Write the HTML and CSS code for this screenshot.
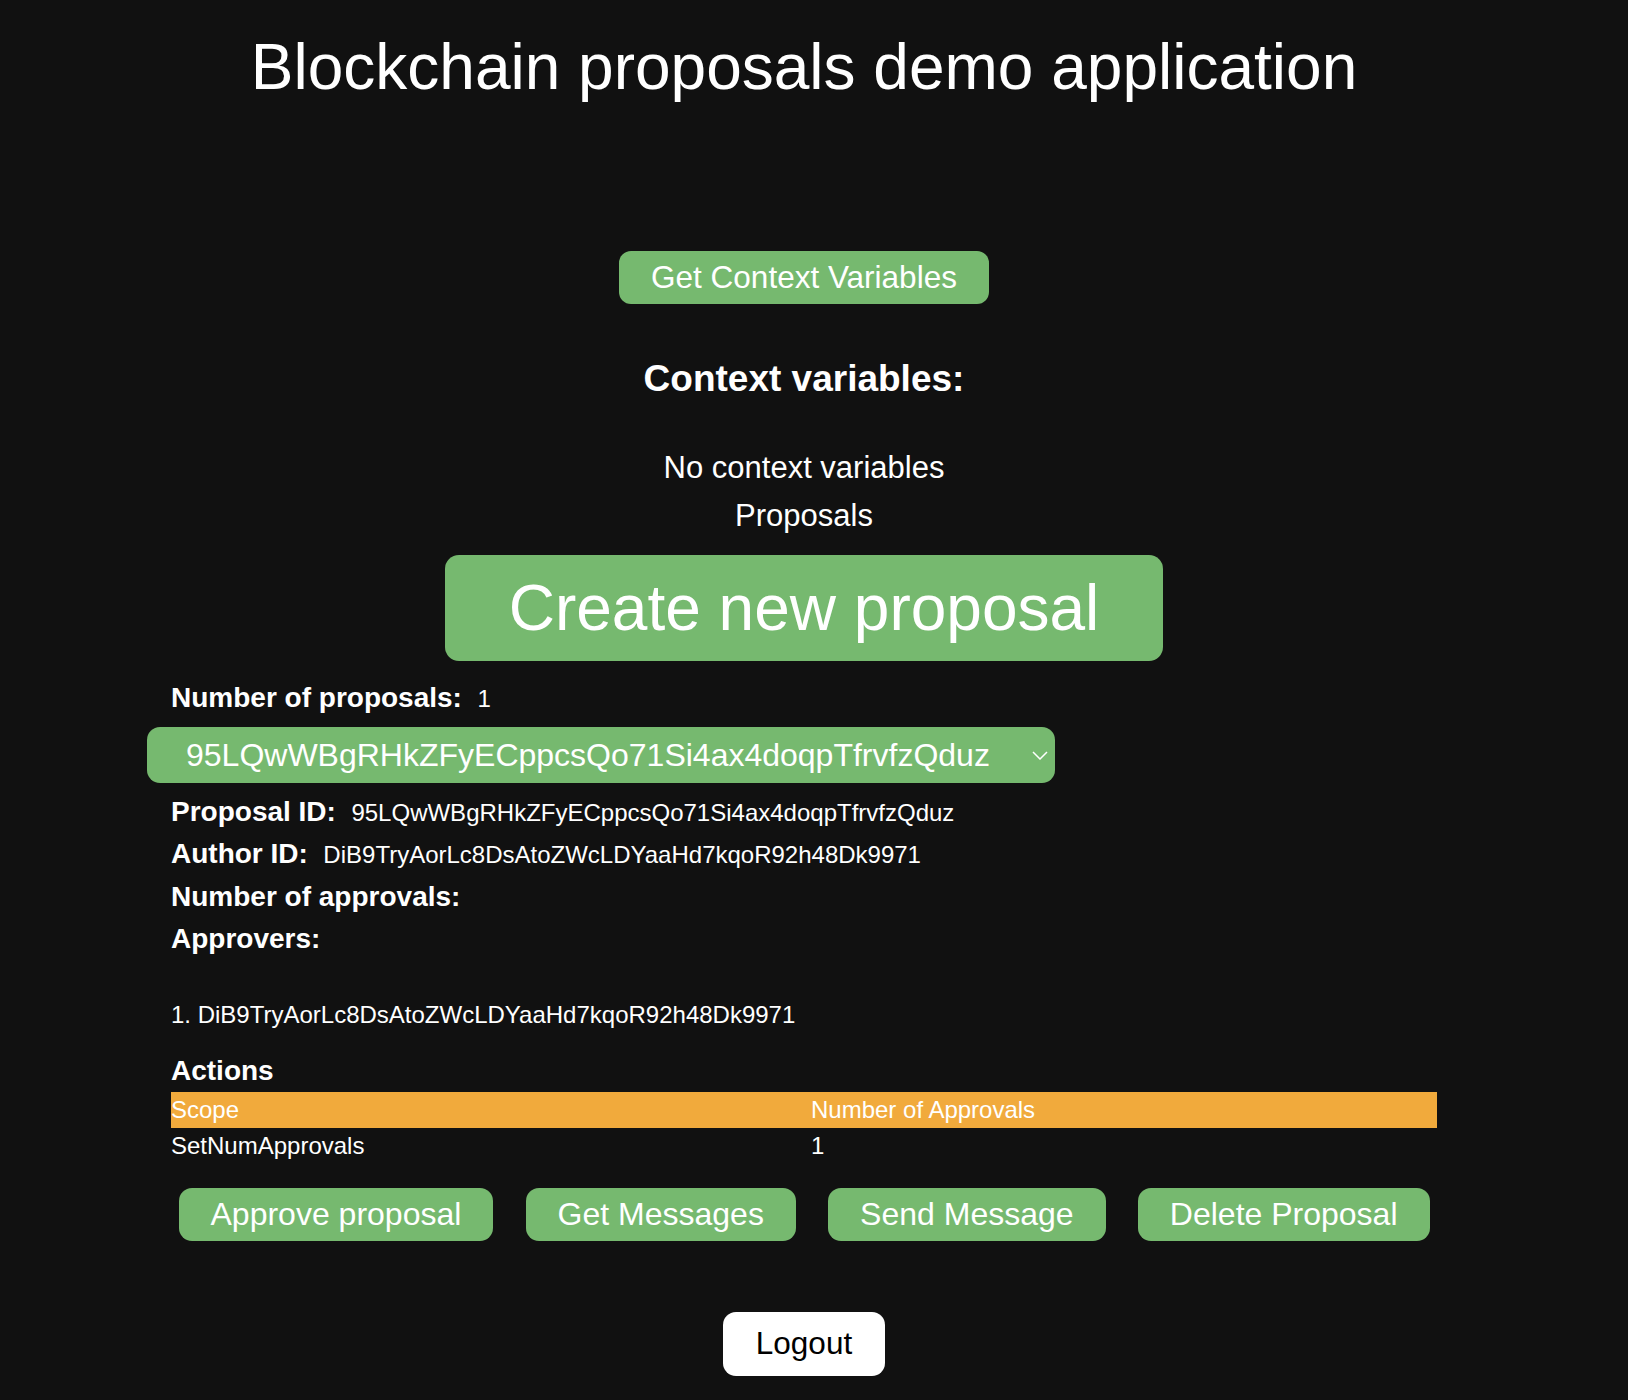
FILE: index.html
```html
<!DOCTYPE html>
<html lang="en">
<head>
<meta charset="utf-8">
<title>Blockchain proposals demo application</title>
<link rel="stylesheet" href="styles.css">
</head>
<body>
<div class="app">
  <div class="top">
    <h1 class="title">Blockchain proposals demo application</h1>
    <button class="btn btn-ctx">Get Context Variables</button>
    <h2 class="ctx-title">Context variables:</h2>
    <p class="ctx-empty">No context variables</p>
    <p class="proposals-title">Proposals</p>
    <button class="btn btn-create">Create new proposal</button>
  </div>

  <div class="content">
    <div class="row">
      <span class="label">Number of proposals:</span>
      <span class="value">1</span>
    </div>
    <div class="select-wrap">
      <select class="proposal-select">
        <option>95LQwWBgRHkZFyECppcsQo71Si4ax4doqpTfrvfzQduz</option>
      </select>
      <svg class="chevron" width="16" height="9" viewBox="0 0 16 9"><path d="M1 1 L8 8 L15 1" fill="none" stroke="#ffffff" stroke-width="1.5"/></svg>
    </div>
    <div class="row info-first">
      <span class="label">Proposal ID:</span>
      <span class="value">95LQwWBgRHkZFyECppcsQo71Si4ax4doqpTfrvfzQduz</span>
    </div>
    <div class="row">
      <span class="label">Author ID:</span>
      <span class="value">DiB9TryAorLc8DsAtoZWcLDYaaHd7kqoR92h48Dk9971</span>
    </div>
    <div class="row">
      <span class="label">Number of approvals:</span>
      <span class="value"></span>
    </div>
    <div class="row">
      <span class="label">Approvers:</span>
    </div>
    <ol class="approvers">
      <li>DiB9TryAorLc8DsAtoZWcLDYaaHd7kqoR92h48Dk9971</li>
    </ol>
    <h3 class="actions-title">Actions</h3>
    <table class="actions-table">
      <thead>
        <tr><th class="col-scope">Scope</th><th>Number of Approvals</th></tr>
      </thead>
      <tbody>
        <tr><td>SetNumApprovals</td><td>1</td></tr>
      </tbody>
    </table>
    <div class="action-buttons">
      <button class="btn btn-action">Approve proposal</button>
      <button class="btn btn-action">Get Messages</button>
      <button class="btn btn-action">Send Message</button>
      <button class="btn btn-action">Delete Proposal</button>
    </div>
  </div>

  <div class="logout-wrap">
    <button class="btn-logout">Logout</button>
  </div>
</div>
</body>
</html>
```
FILE: styles.css
```css
html, body {
  margin: 0;
  padding: 0;
  background: #111111;
}

body {
  color: #ffffff;
  font-family: "Liberation Sans", Arial, Helvetica, sans-serif;
}

.app {
  width: 1608px;
  padding-top: 30px;
  padding-bottom: 24px;
}

.top {
  display: flex;
  flex-direction: column;
  align-items: center;
}

.title {
  margin: 0;
  font-size: 64px;
  font-weight: normal;
  line-height: normal;
}

.btn {
  border: none;
  background: #76b96f;
  color: #ffffff;
  font-family: inherit;
  line-height: normal;
  cursor: pointer;
}

.btn-ctx {
  margin-top: 147px;
  font-size: 31.5px;
  padding: 8px 32px;
  border-radius: 12px;
}

.ctx-title {
  margin: 54px 0 0;
  font-size: 37px;
  font-weight: bold;
  line-height: normal;
}

.ctx-empty {
  margin: 49.5px 0 0;
  font-size: 31px;
  line-height: normal;
}

.proposals-title {
  margin: 12px 0 0;
  font-size: 31px;
  line-height: normal;
}

.btn-create {
  margin-top: 21px;
  font-size: 64px;
  padding: 16px 64px;
  border-radius: 14px;
}

.content {
  margin: 16.5px 171px 0;
  width: 1266px;
}

.row {
  display: flex;
  align-items: baseline;
  font-size: 28px;
  line-height: 42.5px;
}

.label {
  font-weight: bold;
  margin-right: 15.5px;
}

.value {
  font-size: 24px;
  line-height: normal;
}

.select-wrap {
  position: relative;
  margin: 7px 0 8px -24px;
  width: 908px;
  height: 56px;
}

.proposal-select {
  -webkit-appearance: none;
  appearance: none;
  display: block;
  width: 100%;
  height: 100%;
  margin: 0;
  border: none;
  border-radius: 13px;
  background: #76b96f;
  color: #ffffff;
  font-family: inherit;
  font-size: 32px;
  padding: 0 0 0 39px;
  outline: none;
}

.chevron {
  position: absolute;
  right: 7px;
  top: 24px;
  pointer-events: none;
}

.approvers {
  margin: 40px 0 0;
  padding: 0;
  list-style-position: inside;
  font-size: 24px;
  line-height: normal;
}

.actions-title {
  margin: 26px 0 0;
  font-size: 28px;
  font-weight: bold;
  line-height: normal;
}

.actions-table {
  margin-top: 5px;
  width: 100%;
  border-collapse: collapse;
  font-size: 24px;
  line-height: normal;
}

.actions-table th,
.actions-table td {
  padding: 4px 0;
  text-align: left;
  font-weight: normal;
}

.actions-table thead tr {
  background: #f1aa3c;
}

.col-scope {
  width: 640px;
}

.action-buttons {
  margin-top: 24px;
  display: flex;
  justify-content: space-between;
  padding: 0 7.5px;
}

.btn-action {
  font-size: 32px;
  padding: 8px 32px;
  border-radius: 13px;
}

.logout-wrap {
  display: flex;
  justify-content: center;
  margin-top: 71px;
}

.btn-logout {
  border: none;
  background: #ffffff;
  color: #000000;
  font-family: inherit;
  font-size: 31.5px;
  line-height: normal;
  padding: 13.5px 32.5px;
  border-radius: 13px;
  cursor: pointer;
}
```
